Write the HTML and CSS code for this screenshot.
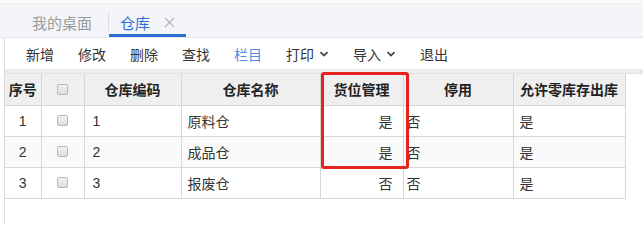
FILE: index.html
```html
<!DOCTYPE html>
<html lang="zh-CN">
<head>
<meta charset="utf-8">
<title>仓库</title>
<link rel="stylesheet" href="styles.css">
</head>
<body>
<div class="topstrip"></div>
<div class="tabbar">
  <div class="tab">我的桌面</div>
  <div class="tab-sep"></div>
  <div class="tab active">
    <span>仓库</span>
    <svg class="close" width="11" height="11" viewBox="0 0 11 11"><path d="M1 1L10 10M10 1L1 10" stroke="#b5b8bd" stroke-width="1.3" fill="none"/></svg>
  </div>
</div>
<div class="panel">
  <div class="toolbar">
    <span class="btn">新增</span>
    <span class="btn">修改</span>
    <span class="btn">删除</span>
    <span class="btn">查找</span>
    <span class="btn blue">栏目</span>
    <span class="btn">打印<svg class="chev" width="10" height="8" viewBox="0 0 10 8"><path d="M1.5 2.2L5 5.6L8.5 2.2" stroke="#444" stroke-width="1.8" fill="none"/></svg></span>
    <span class="btn">导入<svg class="chev" width="10" height="8" viewBox="0 0 10 8"><path d="M1.5 2.2L5 5.6L8.5 2.2" stroke="#444" stroke-width="1.8" fill="none"/></svg></span>
    <span class="btn">退出</span>
  </div>
  <div class="gap"></div>
  <div class="grid-wrap">
    <table class="grid">
      <colgroup>
        <col class="c1"><col class="c2"><col class="c3"><col class="c4"><col class="c5"><col class="c6"><col class="c7">
      </colgroup>
      <thead>
        <tr>
          <th>序号</th>
          <th><span class="cb"></span></th>
          <th>仓库编码</th>
          <th>仓库名称</th>
          <th>货位管理</th>
          <th>停用</th>
          <th>允许零库存出库</th>
        </tr>
      </thead>
      <tbody>
        <tr>
          <td class="ctr">1</td><td class="ctr"><span class="cb"></span></td><td class="code">1</td><td class="name">原料仓</td><td class="loc">是</td><td class="stop">否</td><td class="allow">是</td>
        </tr>
        <tr class="alt">
          <td class="ctr">2</td><td class="ctr"><span class="cb"></span></td><td class="code">2</td><td class="name">成品仓</td><td class="loc">是</td><td class="stop">否</td><td class="allow">是</td>
        </tr>
        <tr>
          <td class="ctr">3</td><td class="ctr"><span class="cb"></span></td><td class="code">3</td><td class="name">报废仓</td><td class="loc">否</td><td class="stop">否</td><td class="allow">是</td>
        </tr>
      </tbody>
    </table>
    <div class="highlight"></div>
  </div>
</div>
</body>
</html>
```
FILE: styles.css
```css
* { box-sizing: border-box; }
html, body { margin: 0; padding: 0; }
body {
  width: 643px;
  height: 225px;
  overflow: hidden;
  background: #ffffff;
  font-family: "Noto Sans CJK SC", "Microsoft YaHei", sans-serif;
  color: #333333;
}
.topstrip {
  height: 4px;
  background: #fafafa;
  border-bottom: 1px solid #eceef2;
}
.tabbar {
  height: 34px;
  background: #f3f5f9;
  display: flex;
  align-items: stretch;
  padding-left: 32px;
  border-bottom: 1px solid #e6e8ec;
}
.tab {
  display: flex;
  align-items: center;
  flex-shrink: 0;
  white-space: nowrap;
  padding-top: 6px;
  font-size: 15px;
  color: #9a9a9a;
  padding-right: 16px;
  border-bottom: 3px solid transparent;
}
.tab-sep {
  width: 1px;
  height: 19px;
  background: #d9dce2;
  align-self: center;
  margin-top: 2px;
}
.tab.active {
  color: #2f6ed6;
  padding-left: 11px;
  padding-right: 11px;
  border-bottom: 3px solid #2f6ed6;
}
.close { margin-left: 14px; margin-top: 1px; }
.panel {
  margin-left: 4px;
  border-left: 1px solid #dcdcdc;
  height: 186px;
}
.toolbar {
  height: 31px;
  display: flex;
  align-items: center;
  padding-left: 9px;
  background: #ffffff;
}
.btn {
  font-size: 14px;
  color: #333333;
  padding: 0 12px;
  display: flex;
  align-items: center;
  line-height: 20px;
}
.btn.blue { color: #4d8be8; }
.chev { margin-left: 5px; margin-top: 1px; }
.gap {
  height: 5px;
  background: #ececec;
  border-bottom: 1px solid #e2e2e2;
}
.grid-wrap {
  position: relative;
  width: 620px;
}
.grid {
  border-collapse: collapse;
  table-layout: fixed;
  width: 620px;
  font-size: 14px;
  font-family: "Liberation Sans", "Noto Sans CJK SC", sans-serif;
}
.c1 { width: 36px; }
.c2 { width: 43px; }
.c3 { width: 97px; }
.c4 { width: 139px; }
.c5 { width: 83px; }
.c6 { width: 110px; }
.c7 { width: 112px; }
.grid th, .grid td {
  border: 1px solid #d6d6d6;
  height: 31px;
  padding: 0;
  vertical-align: middle;
  white-space: nowrap;
  overflow: hidden;
}
.grid thead th {
  background: #efefef;
  font-weight: bold;
  text-align: center;
  color: #222222;
  border-top: none;
  border-left-color: #dedede;
}
.grid thead th:first-child, .grid td:first-child { border-left: none; }
.grid tbody tr { background: #ffffff; }
.grid tbody tr.alt { background: #fafafa; }
.ctr { text-align: center; }
.code { padding-left: 8px !important; }
.name { padding-left: 6px !important; }
.loc { text-align: right; padding-right: 10px !important; }
.stop { padding-left: 3px !important; }
.allow { padding-left: 6px !important; }
.cb {
  display: inline-block;
  width: 11px;
  height: 11px;
  border: 1px solid #b9b9b9;
  border-radius: 2px;
  background: linear-gradient(#f2f2f2, #dcdcdc);
  vertical-align: middle;
  margin-top: -2px;
}
.highlight {
  position: absolute;
  left: 316px;
  top: -2px;
  width: 88px;
  height: 97px;
  border: 3px solid #e5231d;
  border-radius: 3px;
  pointer-events: none;
}
```
